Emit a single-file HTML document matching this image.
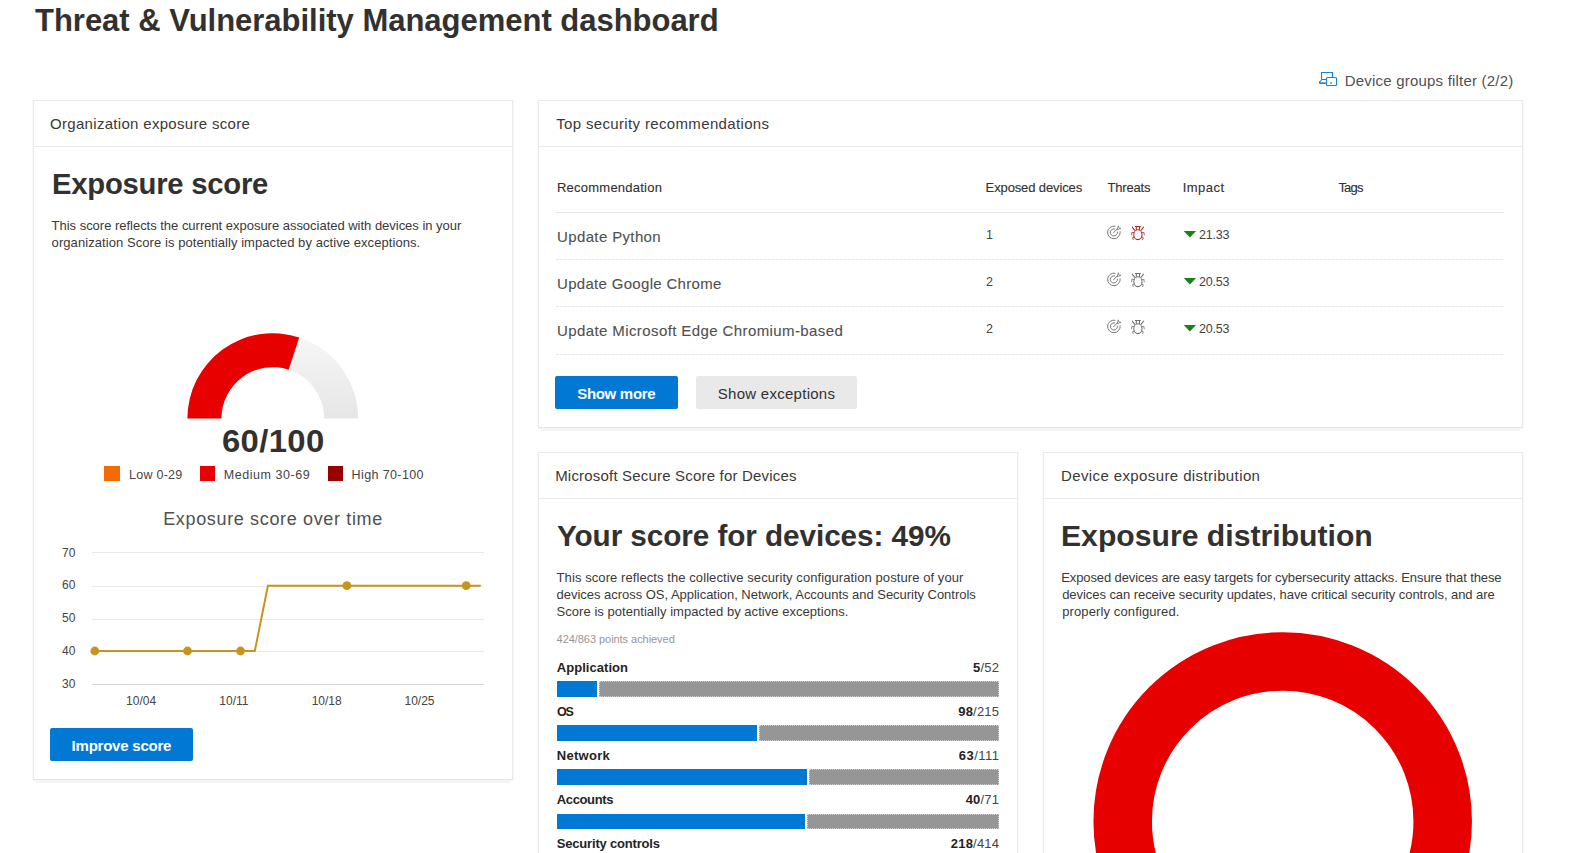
<!DOCTYPE html>
<html lang="en">
<head>
<meta charset="utf-8">
<title>Threat &amp; Vulnerability Management dashboard</title>
<style>
*{box-sizing:border-box;margin:0;padding:0}
html,body{width:1574px;height:853px;overflow:hidden;background:#fff}
body{position:relative;font-family:"Liberation Sans",sans-serif;color:#323130}
.t{position:absolute;white-space:nowrap;line-height:1}
.b{font-weight:bold}
.card{position:absolute;background:#fff;border:1px solid #eaeaea;border-bottom-color:#e5e5e5;box-shadow:0 6px 0 -3px #f5f5f5,0 1px 0 0 #f3f3f3,1px 0 0 0 #f9f9f9,-1px 0 0 0 #fafafa}
.hd{position:absolute;left:0;right:0;top:45px;height:1px;background:#e9e9e9}
.ct{font-size:15px;color:#3a3938}
.h2{font-size:30px;font-weight:bold;color:#323130}
.p{font-size:13px;line-height:17px;color:#3a3938}
.btn{position:absolute;height:33px;border-radius:2px;background:#0078d4}
.btn.g{background:#e9e9e9}
.th{font-size:13px;color:#323130;-webkit-text-stroke:0.12px #323130}
.rn{font-size:15px;color:#505050;-webkit-text-stroke:0.1px #505050}
.num{font-size:12.5px;color:#444}
.row{position:absolute;left:556px;width:948px;height:1px;background:repeating-linear-gradient(90deg,#e7e7e7 0,#e7e7e7 3px,#f8f8f8 3px,#f8f8f8 4px)}
.bl{font-size:13px;font-weight:bold;color:#252423}
.bb{position:absolute;left:557px;background:#0078d4}
.bg{position:absolute;background:#969696;border:1px dotted rgba(255,255,255,.55)}
.v{letter-spacing:.2px;margin-right:-.2px}
.v span{font-weight:normal;color:#444}
</style>
</head>
<body>

<div class="t b" id="title" style="left:35.0px;top:5.0px;font-size:31px;color:#323130;letter-spacing:-0.02px">Threat &amp; Vulnerability Management dashboard</div>

<!-- device groups filter -->
<svg style="position:absolute;left:1312px;top:66px" width="32" height="26" viewBox="0 0 32 26" fill="none" stroke="#1682dc" stroke-width="1.1" stroke-linejoin="round">
<path d="M14 13.5H9.5V6.5H20.5V11" stroke-linejoin="miter"/><path d="M9.4 14.3L7.5 16Q7.2 17.4 8.6 17.4H13.8"/><path d="M8 16.5H13.8" stroke-opacity="0.5"/><rect x="14.5" y="11.5" width="10" height="8" rx="1"/><rect x="18.1" y="16.2" width="1.9" height="1.6" fill="#1682dc" fill-opacity="0.8" stroke="none"/>
</svg>
<div class="t" id="dgf" style="left:1344.8px;top:73.0px;font-size:15px;color:#525150;letter-spacing:0.20px">Device groups filter (2/2)</div>

<!-- CARD 1 -->
<div class="card" style="left:33px;top:100px;width:480px;height:680px"><div class="hd"></div></div>
<div class="t ct" id="c1h" style="left:50.0px;top:116.1px;letter-spacing:0.31px">Organization exposure score</div>
<div class="t h2" id="c1t" style="left:52.0px;top:168.6px;letter-spacing:-0.25px;transform:scaleX(0.975);transform-origin:0 0">Exposure score</div>
<div class="t p" id="c1p1" style="left:51.6px;top:217.1px;letter-spacing:-0.02px">This score reflects the current exposure associated with devices in your</div>
<div class="t p" id="c1p2" style="left:51.6px;top:234.2px;letter-spacing:0.07px">organization Score is potentially impacted by active exceptions.</div>

<!-- gauge -->
<svg style="position:absolute;left:180px;top:328px" width="186" height="96" viewBox="180 328 186 96">
<defs><linearGradient id="gg" x1="0" y1="0" x2="0" y2="1"><stop offset="0" stop-color="#f7f7f7"/><stop offset="1" stop-color="#e6e6e6"/></linearGradient></defs>
<path d="M187.4 418.6A85.4 85.4 0 0 1 358.2 418.6L324.2 418.6A51.4 51.4 0 0 0 221.4 418.6Z" fill="url(#gg)"/>
<path id="gred" d="M187.4 418.6A85.4 85.4 0 0 1 299.19 337.38L288.68 369.72A51.4 51.4 0 0 0 221.4 418.6Z" fill="#e60000"/>
</svg>
<div class="t b" id="g60" style="left:222.0px;top:426.3px;font-size:31px;color:#323130;letter-spacing:0.32px;transform:scaleX(1.06);transform-origin:0 0">60/100</div>
<div style="position:absolute;left:104px;top:466px;width:16px;height:15px;background:#f56a00"></div>
<div class="t" id="lg1" style="left:129.0px;top:469.1px;font-size:12.5px;color:#444;letter-spacing:0.26px">Low 0-29</div>
<div style="position:absolute;left:200px;top:466px;width:15px;height:15px;background:#e60000"></div>
<div class="t" id="lg2" style="left:223.8px;top:469.1px;font-size:12.5px;color:#444;letter-spacing:0.54px">Medium 30-69</div>
<div style="position:absolute;left:328px;top:466px;width:15px;height:15px;background:#990000"></div>
<div class="t" id="lg3" style="left:351.6px;top:469.1px;font-size:12.5px;color:#444;letter-spacing:0.38px">High 70-100</div>
<div class="t" id="eot" style="left:163.2px;top:509.8px;font-size:18px;color:#505050;letter-spacing:0.65px">Exposure score over time</div>

<!-- line chart -->
<svg style="position:absolute;left:50px;top:540px" width="450" height="175" viewBox="50 540 450 175">
<g stroke="#e8e8e8" stroke-width="1" shape-rendering="crispEdges">
<line x1="92" x2="484" y1="552.5" y2="552.5"/><line x1="92" x2="484" y1="586.5" y2="586.5"/><line x1="92" x2="484" y1="619.5" y2="619.5"/><line x1="92" x2="484" y1="651.5" y2="651.5"/>
<line x1="92" x2="484" y1="684.5" y2="684.5" stroke="#d4d4d4"/>
</g>
<path d="M94.8 651H254.8L267.9 585.7H480.8" fill="none" stroke="#c7941d" stroke-width="2" stroke-linejoin="miter"/>
<g fill="#c7941d"><circle cx="94.8" cy="651" r="4.4"/><circle cx="187.5" cy="651" r="4.4"/><circle cx="240.5" cy="651" r="4.4"/><circle cx="346.9" cy="585.7" r="4.4"/><circle cx="466.2" cy="585.7" r="4.4"/></g>
<g font-family="'Liberation Sans',sans-serif" font-size="12" fill="#444">
<text x="62" y="556.5">70</text><text x="62" y="589">60</text><text x="62" y="622">50</text><text x="62" y="654.5">40</text><text x="62" y="688">30</text>
<g text-anchor="middle"><text x="141.1" y="705">10/04</text><text x="233.9" y="705">10/11</text><text x="326.7" y="705">10/18</text><text x="419.5" y="705">10/25</text></g>
</g>
</svg>
<div class="btn" style="left:50px;top:728px;width:143px"></div>
<div class="t b" id="b1" style="left:71.6px;top:737.7px;font-size:15px;color:#fff;letter-spacing:-0.23px">Improve score</div>

<!-- CARD 2 -->
<div class="card" style="left:538px;top:100px;width:985px;height:328px"><div class="hd"></div></div>
<div class="t ct" id="c2h" style="left:556.2px;top:116.1px;letter-spacing:0.35px">Top security recommendations</div>

<div class="t th" id="th1" style="left:557.0px;top:181.0px;letter-spacing:0.23px">Recommendation</div>
<div class="t th" id="th2" style="left:985.6px;top:181.0px;letter-spacing:-0.12px">Exposed devices</div>
<div class="t th" id="th3" style="left:1107.4px;top:181.0px;letter-spacing:-0.16px">Threats</div>
<div class="t th" id="th4" style="left:1182.8px;top:181.0px;letter-spacing:0.44px">Impact</div>
<div class="t th" id="th5" style="left:1338.4px;top:181.0px;letter-spacing:-0.78px">Tags</div>
<div style="position:absolute;left:556px;top:212px;width:948px;height:1px;background:#e6e6e6"></div>
<div class="row" style="top:259px"></div><div class="row" style="top:306px"></div><div class="row" style="top:354px"></div>
<div class="t rn" id="r1" style="left:557.0px;top:228.8px;letter-spacing:0.37px">Update Python</div>
<div class="t rn" id="r2" style="left:557.0px;top:275.8px;letter-spacing:0.31px">Update Google Chrome</div>
<div class="t rn" id="r3" style="left:557.0px;top:322.7px;letter-spacing:0.40px">Update Microsoft Edge Chromium-based</div>
<div class="t num" id="n1" style="left:986px;top:228.7px">1</div>
<div class="t num" id="n2" style="left:986px;top:275.6px">2</div>
<div class="t num" id="n3" style="left:986px;top:322.6px">2</div>
<div class="t num" id="i1" style="left:1199px;top:228.7px;letter-spacing:-0.2px">21.33</div>
<div class="t num" id="i2" style="left:1199px;top:275.6px;letter-spacing:-0.2px">20.53</div>
<div class="t num" id="i3" style="left:1199px;top:322.6px;letter-spacing:-0.2px">20.53</div>
<svg style="position:absolute;left:1100px;top:220px" width="110" height="120" viewBox="1100 220 110 120">
<defs>
<g id="tg" fill="none" stroke-width="0.95" stroke-linecap="round" stroke-linejoin="round"><path d="M13 6.2A6.3 6.3 0 1 0 18.2 11.85"/><path d="M12.8 8.9A3.6 3.6 0 1 0 15.5 12.2"/><path d="M11.5 12.7L15.4 9"/><path d="M15.2 9.4L16.3 5.8 16.8 7.8 18.6 8.3Z" stroke-width="0.75"/></g>
<g id="bug" fill="none" stroke-width="1.05" stroke-linecap="round" stroke-linejoin="round"><ellipse cx="35.9" cy="14.7" rx="4.1" ry="4.9"/><path d="M34.3 9.6V6.5h3.2V9.6M33.4 6.5h5"/><path d="M32.8 10.3L30.6 7.7 30.4 7M39 10.3l2.2-2.6 .2-.7"/><path d="M31.7 12.6L30 12.4 29.5 14.8M40.1 12.6l1.7-.2 .5 2.4M31.9 16.8L30.6 18 31.2 19.6M39.9 16.8l1.3 1.2 -.6 1.6" stroke-opacity="0.75"/></g>
<path id="tri" d="M0 0h12.4L6.2 6.4Z"/>
</defs>
<use href="#tg" x="1102" y="220" stroke="#707070"/><use href="#bug" x="1102" y="220" stroke="#a92a22"/><use href="#tri" x="1183.7" y="231" fill="#16831a"/>
<use href="#tg" x="1102" y="267" stroke="#707070"/><use href="#bug" x="1102" y="267" stroke="#707070"/><use href="#tri" x="1183.7" y="278" fill="#16831a"/>
<use href="#tg" x="1102" y="314" stroke="#707070"/><use href="#bug" x="1102" y="314" stroke="#707070"/><use href="#tri" x="1183.7" y="325" fill="#16831a"/>
</svg>
<div class="btn" style="left:555px;top:376px;width:123px"></div>
<div class="t b" id="b2" style="left:577.2px;top:386.4px;font-size:15px;color:#fff;letter-spacing:-0.30px">Show more</div>
<div class="btn g" style="left:696px;top:376px;width:161px"></div>
<div class="t" id="b3" style="left:717.8px;top:386.4px;font-size:15px;color:#323130;letter-spacing:0.27px">Show exceptions</div>

<!-- CARD 3 -->
<div class="card" style="left:538px;top:452px;width:480px;height:420px"><div class="hd"></div></div>
<div class="t ct" id="c3h" style="left:555.2px;top:468.2px;letter-spacing:0.19px">Microsoft Secure Score for Devices</div>
<div class="t h2" id="c3t" style="left:557.2px;top:520.5px;letter-spacing:-0.07px;transform:scaleX(0.99);transform-origin:0 0">Your score for devices: 49%</div>

<div class="t p" id="c3p1" style="left:556.6px;top:569.3px;letter-spacing:0.08px">This score reflects the collective security configuration posture of your</div>
<div class="t p" id="c3p2" style="left:556.6px;top:586.3px;letter-spacing:-0.03px">devices across OS, Application, Network, Accounts and Security Controls</div>
<div class="t p" id="c3p3" style="left:556.6px;top:603.3px;letter-spacing:0.04px">Score is potentially impacted by active exceptions.</div>
<div class="t" id="pts" style="left:556.6px;top:634.4px;font-size:11px;color:#979797;letter-spacing:-0.05px">424/863 points achieved</div>
<div class="t bl" id="l1" style="left:556.8px;top:660.8px;letter-spacing:0.04px">Application</div><div class="t bl v" id="v1" style="right:575px;top:660.8px">5<span>/52</span></div>
<div class="bb" style="top:681px;height:16px;width:40px"></div><div class="bg" style="top:681px;height:16px;left:599px;width:400.3px"></div>
<div class="t bl" id="l2" style="left:557px;top:705.6px;letter-spacing:-1.2px;font-size:12.5px">OS</div><div class="t bl v" id="v2" style="right:575px;top:704.8px">98<span>/215</span></div>
<div class="bb" style="top:725px;height:15.5px;width:200px"></div><div class="bg" style="top:725px;height:15.5px;left:759px;width:240.3px"></div>
<div class="t bl" id="l3" style="left:556.8px;top:748.8px;letter-spacing:0.29px">Network</div><div class="t bl v" id="v3" style="right:575px;letter-spacing:.5px;margin-right:-.5px;top:748.8px">63<span>/111</span></div>
<div class="bb" style="top:769px;height:15.6px;width:249.5px"></div><div class="bg" style="top:769px;height:15.6px;left:808.5px;width:190.8px"></div>
<div class="t bl" id="l4" style="left:556.8px;top:792.8px;letter-spacing:-0.38px">Accounts</div><div class="t bl v" id="v4" style="right:575px;top:792.8px">40<span>/71</span></div>
<div class="bb" style="top:813.7px;height:15px;width:248px"></div><div class="bg" style="top:813.7px;height:15px;left:807px;width:192.3px"></div>
<div class="t bl" id="l5" style="left:556.8px;top:836.8px;letter-spacing:-0.19px">Security controls</div><div class="t bl v" id="v5" style="right:575px;top:836.8px">218<span>/414</span></div>

<!-- CARD 4 -->
<div class="card" style="left:1043px;top:452px;width:480px;height:420px"><div class="hd"></div></div>
<div class="t ct" id="c4h" style="left:1061.0px;top:468.2px;letter-spacing:0.39px">Device exposure distribution</div>
<div class="t h2" id="c4t" style="left:1061.0px;top:520.5px;letter-spacing:0.01px;transform:scaleX(1.005);transform-origin:0 0">Exposure distribution</div>

<div class="t p" id="c4p1" style="left:1061.2px;top:569.3px;letter-spacing:-0.10px">Exposed devices are easy targets for cybersecurity attacks. Ensure that these</div>
<div class="t p" id="c4p2" style="left:1062.2px;top:586.3px;letter-spacing:-0.06px">devices can receive security updates, have critical security controls, and are</div>
<div class="t p" id="c4p3" style="left:1062.2px;top:603.3px;letter-spacing:0.12px">properly configured.</div>
<svg style="position:absolute;left:1085px;top:625px" width="400" height="228" viewBox="1085 625 400 228">
<circle cx="1282.7" cy="821.4" r="160" fill="none" stroke="#e60000" stroke-width="58.5"/>
</svg>

</body>
</html>
